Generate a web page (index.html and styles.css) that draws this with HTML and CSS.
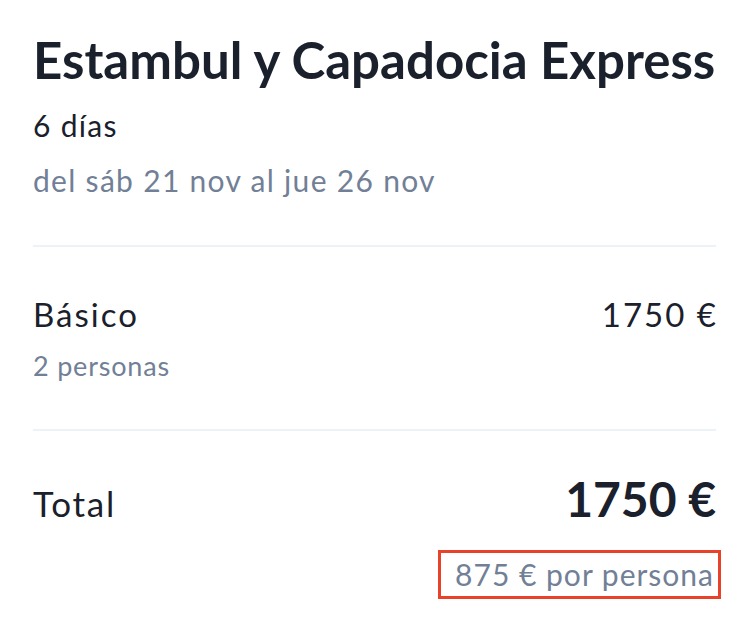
FILE: index.html
```html
<!DOCTYPE html>
<html>
  <head>
    <meta charset="utf-8">
    <title>Resumen del viaje</title>
    <link rel="stylesheet" href="styles.css">
  </head>
  <body>
    <div class="summary">
      <div class="trip">
        <h1 class="trip-title">Estambul y Capadocia Express</h1>
        <div class="trip-days">6 días</div>
        <div class="trip-dates">del sáb 21 nov al jue 26 nov</div>
      </div>
      <div class="line">
        <div class="line-row">
          <span class="line-name">Básico</span>
          <span class="line-price">1750 €</span>
        </div>
        <div class="line-sub">2 personas</div>
      </div>
      <div class="total">
        <div class="total-row">
          <span class="total-label">Total</span>
          <span class="total-price">1750 €</span>
        </div>
        <div class="total-sub"><span class="highlight">875 € por persona</span></div>
      </div>
    </div>
  </body>
</html>
```

FILE: styles.css
```css
/* resumen */
body {
  margin: 0;
  background: #fff;
  color: #1a202c;
  font-family: Lato, "Noto Sans", sans-serif;
}
.summary {
  padding: 0 36px 0 33px;
}
.trip {
  padding: 30px 0 45px;
  border-bottom: 2px solid #edf2f7;
}
.trip-title {
  margin: 0;
  font-size: 51px;
  font-weight: 700;
  line-height: 60px;
  white-space: nowrap;
}
.trip-days {
  margin-top: 15px;
  font-size: 30px;
  line-height: 40px;
  letter-spacing: 1.3px;
}
.trip-dates {
  margin-top: 15px;
  font-size: 30px;
  line-height: 40px;
  letter-spacing: 1.3px;
  color: #718096;
}
.line {
  padding: 47px 0 45px;
  border-bottom: 2px solid #edf2f7;
}
.line-row,
.total-row {
  display: flex;
  justify-content: space-between;
  align-items: baseline;
}
.line-name,
.line-price {
  font-size: 33px;
  line-height: 40px;
  letter-spacing: 2px;
}
.line-price {
  margin-right: -2px;
}
.line-sub {
  margin-top: 14px;
  font-size: 27px;
  line-height: 36px;
  letter-spacing: 0.8px;
  color: #718096;
}
.total {
  padding-top: 40px;
}
.total-label {
  font-size: 35px;
  letter-spacing: 1.8px;
}
.total-price {
  font-size: 48px;
  font-weight: 700;
  line-height: 56px;
}
.total-sub {
  display: flex;
  justify-content: flex-end;
  margin-top: 23px;
  margin-right: -5px;
}
.highlight {
  padding: 2px 4px 3px 14px;
  border: 3px solid #e8432a;
  font-size: 30px;
  line-height: 38px;
  letter-spacing: 1px;
  color: #718096;
}
```
